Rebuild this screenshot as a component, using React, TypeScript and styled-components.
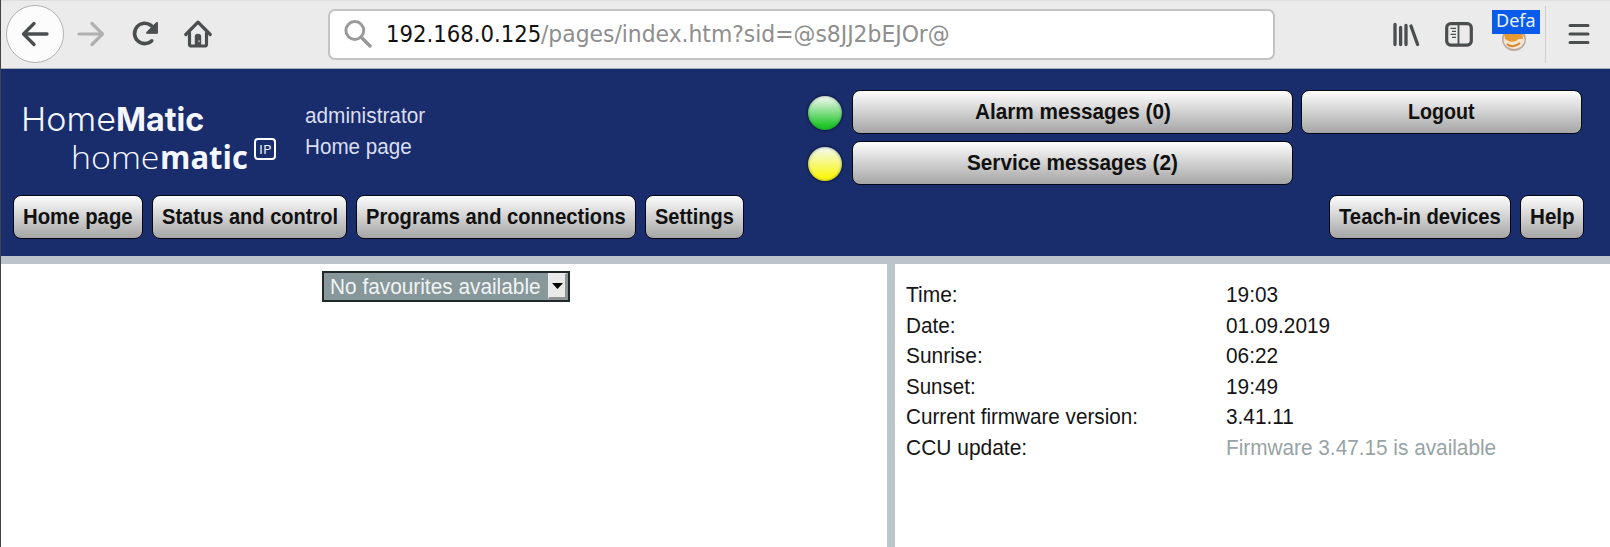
import React, { useLayoutEffect, useRef, useState } from "react";
import styled, { createGlobalStyle } from "styled-components";

const Global = createGlobalStyle`
  * { box-sizing: border-box; }
  body { margin: 0; background: #fff; overflow: hidden; }
`;

const Page = styled.div`
  display: flex;
  flex-direction: column;
  width: 1610px;
  height: 547px;
  border-left: 1px solid #3f4247;
  font: 22px/30px "Liberation Sans", Arial, sans-serif;
  color: #151515;
  background: #fff;
`;

/* ---------- text that is condensed to a given width ---------- */
const FitBox = styled.span<{ $w: number }>`
  display: inline-block;
  width: ${(p) => p.$w}px;
  white-space: pre;
  text-align: left;
`;
const FitInner = styled.span`
  display: inline-block;
  transform-origin: 0 50%;
`;
function Fit({ w, children }: { w: number; children: React.ReactNode }) {
  const ref = useRef<HTMLSpanElement>(null);
  const [scale, setScale] = useState(1);
  useLayoutEffect(() => {
    if (ref.current) setScale(w / ref.current.offsetWidth);
  }, [w]);
  return (
    <FitBox $w={w}>
      <FitInner ref={ref} style={{ transform: `scaleX(${scale})` }}>
        {children}
      </FitInner>
    </FitBox>
  );
}

/* ---------- browser toolbar ---------- */
const Toolbar = styled.div`
  display: flex;
  align-items: center;
  flex: none;
  height: 69px;
  padding: 0 20px 1px 5px;
  background: #ebebeb;
  border-top: 1px solid #dedede;
  border-bottom: 1px solid #a9adb8;
`;
const BackButton = styled.div`
  display: flex;
  align-items: center;
  justify-content: center;
  width: 58px;
  height: 58px;
  border: 1px solid #b1b1b1;
  border-radius: 50%;
  background: #fcfcfc;
`;
const Tool = styled.div<{ $ml: number }>`
  display: flex;
  margin-left: ${(p) => p.$ml}px;
`;
const UrlBar = styled.div`
  display: flex;
  align-items: center;
  width: 947px;
  height: 51px;
  margin-left: 116px;
  padding: 0 0 0 14px;
  border: 2px solid #c3c3c3;
  border-radius: 7px;
  background: #fff;
`;
const Url = styled.div`
  display: flex;
  margin-left: 14px;
  font: 23px/30px "DejaVu Sans Condensed", "DejaVu Sans", sans-serif;
  color: #8e8e8e;
`;
const Host = styled.span`
  color: #111;
`;
const Extension = styled.div`
  position: relative;
  display: flex;
  width: 48px;
  height: 50px;
  margin-left: 19px;
  padding: 14px 0 0 10px;
`;
const ExtensionBadge = styled.span`
  position: absolute;
  left: 0;
  top: 1px;
  height: 24px;
  width: 48px;
  padding-left: 4px;
  background: #0a5bea;
  color: #e9f3ff;
  font: 18px/21px "Noto Sans", sans-serif;
`;
const ToolDivider = styled.div`
  width: 1px;
  height: 57px;
  margin-left: 5px;
  background: #cfcfcf;
`;

/* ---------- page header ---------- */
const Header = styled.header`
  flex: none;
  height: 187px;
  padding: 21px 26px 0 12px;
  background: #192c6b;
`;
const HeaderTop = styled.div`
  display: flex;
  height: 105px;
`;
const Logo = styled.div`
  width: 292px;
  padding: 12px 0 0 8px;
  font-weight: 300;
  color: #f4f7ff;
  b { font-weight: 700; }
`;
const LogoTop = styled.div`
  display: flex;
  font-family: Inter, sans-serif;
  font-size: 33px;
  line-height: 34px;
`;
const LogoBottom = styled.div`
  display: flex;
  padding-left: 50px;
  font-family: "Open Sans", sans-serif;
  font-size: 32px;
  line-height: 36px;
  margin-top: 3px;
`;
const Ip = styled.span`
  display: flex;
  align-items: center;
  justify-content: center;
  width: 22px;
  height: 22px;
  margin: -1px 0 0 6px;
  border: 2.5px solid #fff;
  border-radius: 4px;
  font: 400 13px/16px "Open Sans", sans-serif;
`;
const UserInfo = styled.div`
  width: 503px;
  padding-top: 11px;
  line-height: 30.5px;
  color: #d9def0;
`;
const Messages = styled.div`
  display: flex;
  flex-direction: column;
  gap: 7px;
`;
const MessageRow = styled.div`
  display: flex;
`;
const Led = styled.div<{ $c: string }>`
  width: 34px;
  height: 34px;
  margin: 6px 10px 0 0;
  border-radius: 50%;
  background: linear-gradient(#f2faf0 3%, ${(p) => p.$c} 88%);
  box-shadow: 0 0 2px 1px rgba(15, 25, 60, 0.8), inset 0 0 3px rgba(20, 60, 50, 0.55);
`;
const Button = styled.button<{ $w: number }>`
  display: flex;
  align-items: center;
  justify-content: center;
  flex: none;
  width: ${(p) => p.$w}px;
  height: 44px;
  padding: 0;
  border: 1.5px solid #050814;
  border-radius: 8px;
  background: linear-gradient(#fdfdfd, #d3d3d3 48%, #a5a5a5);
  font: 700 22px/28px "Liberation Sans", Arial, sans-serif;
  color: #111;
`;
const Logout = styled.div`
  margin-left: 8px;
`;
const Menu = styled.nav`
  display: flex;
  gap: 9px;
`;
const Spacer = styled.div`
  flex: 1;
`;

/* ---------- content ---------- */
const Content = styled.main`
  display: flex;
  flex: 1;
  border-top: 8px solid #bac4c9;
`;
const Favourites = styled.section`
  width: 894px;
  padding: 7px 0 0 321px;
  border-right: 8px solid #bac4c9;
`;
const Select = styled.div`
  display: flex;
  width: 248px;
  height: 31px;
  padding-left: 6px;
  border: 2px solid #20282a;
  background: #87979a;
  color: #f0f4f4;
  line-height: 27px;
`;
const SelectArrow = styled.span`
  display: flex;
  align-items: center;
  justify-content: center;
  width: 20px;
  height: 27px;
  margin-left: auto;
  border: 2px solid;
  border-color: #ececec #8f9393 #8f9393 #ececec;
  border-width: 1px 3px 3px 1px;
  background: #e9e9e9;
`;
const Info = styled.dl`
  display: grid;
  grid-template-columns: 320.5px 1fr;
  grid-auto-rows: 30.6px;
  align-content: start;
  margin: 0;
  padding: 16px 0 0 10.5px;
  line-height: 30.6px;
`;
const Term = styled.dt`
  margin: 0;
`;
const Value = styled.dd<{ $muted: boolean }>`
  margin: 0;
  color: ${(p) => (p.$muted ? "#98a3a6" : "#151515")};
`;

const rows: [string, number, string, number][] = [
  ["Time:", 51.5, "19:03", 52],
  ["Date:", 50, "01.09.2019", 104],
  ["Sunrise:", 77, "06:22", 52],
  ["Sunset:", 70, "19:49", 52],
  ["Current firmware version:", 232, "3.41.11", 68],
  ["CCU update:", 121, "Firmware 3.47.15 is available", 270],
];

const ink = "#4b4e4f";

export default function App() {
  return (
    <>
      <Global />
      <Page>
        <Toolbar>
          <BackButton>
            <svg width="28" height="26" viewBox="0 0 28 26" fill="none" stroke={ink} strokeWidth="3.3" strokeLinecap="round" strokeLinejoin="round">
              <path d="M26 13H3M13 2.5L2.5 13L13 23.5" />
            </svg>
          </BackButton>
          <Tool $ml={13}>
            <svg width="28" height="26" viewBox="0 0 28 26" fill="none" stroke="#b0b0b0" strokeWidth="3.2" strokeLinecap="round" strokeLinejoin="round">
              <path d="M2 13H25M15 2.5L25.5 13L15 23.5" />
            </svg>
          </Tool>
          <Tool $ml={27}>
            <svg width="28" height="26" viewBox="0 0 28 26" fill="none">
              <path d="M19.8 19.8A10.2 10.2 0 1 1 19.2 4.5" stroke={ink} strokeWidth="3.6" strokeLinecap="round" />
              <path d="M25.4 1.4V12.3H14.6Q14.6 10.8 16 9.8L22.8 3Q24 1.6 25.4 1.4Z" fill={ink} stroke={ink} strokeWidth="1" strokeLinejoin="round" />
            </svg>
          </Tool>
          <Tool $ml={24}>
            <svg width="28" height="28" viewBox="0 0 28 28" fill="none" stroke={ink} strokeLinecap="round" strokeLinejoin="round">
              <path d="M1.8 14.5L14 2.2L26.2 14.5" strokeWidth="3.2" />
              <path d="M5.5 13V24.2Q5.5 26 7.5 26H20.5Q22.5 26 22.5 24.2V13" strokeWidth="3.2" />
              <path d="M11.6 25V16.5Q11.6 14.5 14 14.5Q16.4 14.5 16.4 16.5V25Z" fill={ink} strokeWidth="1.6" />
              <path d="M15 20.8V21.6" stroke="#ddd" strokeWidth="1.3" />
            </svg>
          </Tool>
          <UrlBar>
            <svg width="28" height="28" viewBox="0 0 28 28" fill="none" stroke="#999" strokeLinecap="round">
              <circle cx="10.8" cy="10.5" r="8.9" strokeWidth="3" />
              <path d="M17.5 17.5L26 26" strokeWidth="3.4" />
            </svg>
            <Url>
              <Host><Fit w={155}>192.168.0.125</Fit></Host>
              <Fit w={409}>/pages/index.htm?sid=@s8JJ2bEJOr@</Fit>
            </Url>
          </UrlBar>
          <Tool $ml={118}>
            <svg width="27" height="25" viewBox="0 0 27 25" fill="none" stroke={ink} strokeWidth="3.3" strokeLinecap="round">
              <path d="M2 2.5V22.5M7.6 5.5V22.5M13 3.5V22.5M18 4L24.6 22.5" />
            </svg>
          </Tool>
          <Tool $ml={25}>
            <svg width="28" height="25" viewBox="0 0 28 25" fill="none" stroke={ink}>
              <rect x="1.7" y="1.7" width="24.6" height="21.4" rx="4" strokeWidth="3.2" />
              <path d="M13.5 2V23" strokeWidth="1.8" />
              <path d="M5.5 6.4H11M7 9.4H11M5.5 12.4H11M7 15.4H11" strokeWidth="1.3" />
            </svg>
          </Tool>
          <Extension>
            <svg width="26" height="30" viewBox="0 0 26 30">
              <circle cx="12" cy="16" r="12" fill="#b9aaa0" />
              <ellipse cx="12" cy="17" rx="10.5" ry="9" fill="#f3e5cf" />
              <path d="M2 7H20L21 16Q16 15 14 18Q8 20 3 16Z" fill="#e99a35" />
              <path d="M5 21Q11 26 18 20" fill="none" stroke="#d9852f" strokeWidth="2" />
            </svg>
            <ExtensionBadge><Fit w={40}>Defa</Fit></ExtensionBadge>
          </Extension>
          <ToolDivider />
          <Tool $ml={22}>
            <svg width="22" height="22" viewBox="0 0 22 22" stroke={ink} strokeWidth="3" strokeLinecap="round">
              <path d="M2 2.5H20M2 11H20M2 19.5H20" />
            </svg>
          </Tool>
        </Toolbar>

        <Header>
          <HeaderTop>
            <Logo>
              <LogoTop><Fit w={95}>Home</Fit><b><Fit w={88}>Matic</Fit></b></LogoTop>
              <LogoBottom>
                <Fit w={89}>home</Fit><b><Fit w={88}>matic</Fit></b>
                <Ip><Fit w={12}>IP</Fit></Ip>
              </LogoBottom>
            </Logo>
            <UserInfo>
              <div><Fit w={120}>administrator</Fit></div>
              <div><Fit w={107}>Home page</Fit></div>
            </UserInfo>
            <Messages>
              <MessageRow>
                <Led $c="#20c52a" />
                <Button $w={441}><Fit w={196}>Alarm messages (0)</Fit></Button>
                <Logout><Button $w={281}><Fit w={67}>Logout</Fit></Button></Logout>
              </MessageRow>
              <MessageRow>
                <Led $c="#fbf713" />
                <Button $w={441}><Fit w={211}>Service messages (2)</Fit></Button>
              </MessageRow>
            </Messages>
          </HeaderTop>
          <Menu>
            <Button $w={130}><Fit w={110}>Home page</Fit></Button>
            <Button $w={195}><Fit w={176}>Status and control</Fit></Button>
            <Button $w={279.5}><Fit w={260}>Programs and connections</Fit></Button>
            <Button $w={99}><Fit w={79}>Settings</Fit></Button>
            <Spacer />
            <Button $w={182}><Fit w={162}>Teach-in devices</Fit></Button>
            <Button $w={64}><Fit w={45}>Help</Fit></Button>
          </Menu>
        </Header>

        <Content>
          <Favourites>
            <Select>
              <Fit w={211}>No favourites available</Fit>
              <SelectArrow>
                <svg width="11" height="6" viewBox="0 0 11 6"><path d="M0 0H11L5.5 6Z" fill="#000" /></svg>
              </SelectArrow>
            </Select>
          </Favourites>
          <Info>
            {rows.map(([label, lw, value, vw], i) => (
              <React.Fragment key={label}>
                <Term><Fit w={lw}>{label}</Fit></Term>
                <Value $muted={i === rows.length - 1}><Fit w={vw}>{value}</Fit></Value>
              </React.Fragment>
            ))}
          </Info>
        </Content>
      </Page>
    </>
  );
}
